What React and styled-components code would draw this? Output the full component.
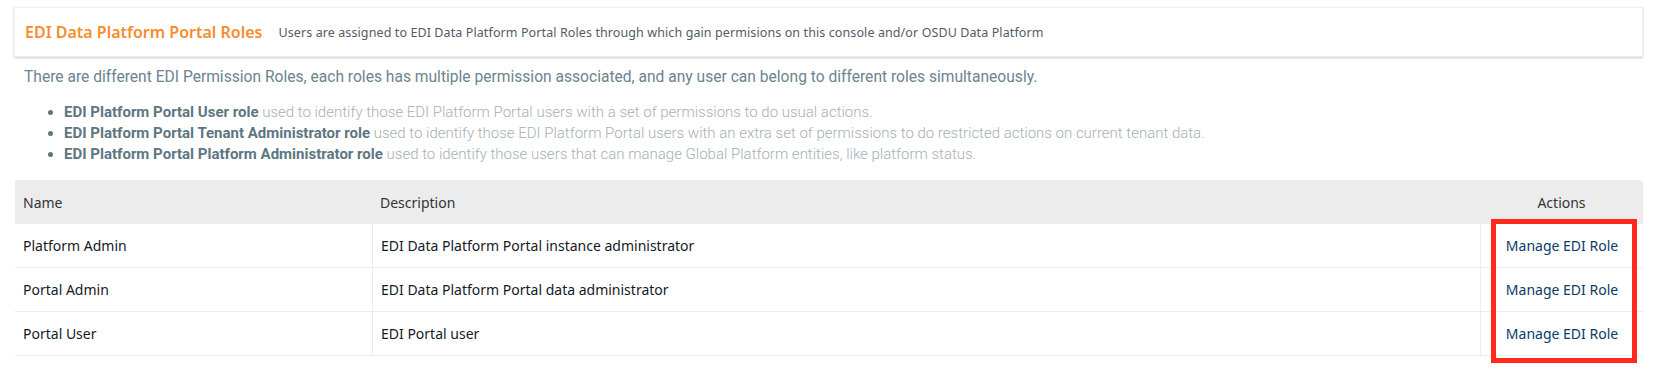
import React from 'react'
import styled, { createGlobalStyle } from 'styled-components'

const GlobalStyle = createGlobalStyle`
    body {
        margin: 0;
        background: #ffffff;
        font-family: "Open Sans", "Noto Sans", sans-serif;
    }
`

const roles = [
    { name: 'Platform Admin', description: 'EDI Data Platform Portal instance administrator' },
    { name: 'Portal Admin', description: 'EDI Data Platform Portal data administrator' },
    { name: 'Portal User', description: 'EDI Portal user' },
]

const bullets = [
    { strong: 'EDI Platform Portal User role', text: 'used to identify those EDI Platform Portal users with a set of permissions to do usual actions.' },
    { strong: 'EDI Platform Portal Tenant Administrator role', text: 'used to identify those EDI Platform Portal users with an extra set of permissions to do restricted actions on current tenant data.' },
    { strong: 'EDI Platform Portal Platform Administrator role', text: 'used to identify those users that can manage Global Platform entities, like platform status.' },
]

const App = () => {
    return <Wrapper>
        <GlobalStyle />
        <Header>
            <Title>EDI Data Platform Portal Roles</Title>
            <Subtitle>Users are assigned to EDI Data Platform Portal Roles through which gain permisions on this console and/or OSDU Data Platform</Subtitle>
        </Header>
        <Intro>There are different EDI Permission Roles, each roles has multiple permission associated, and any user can belong to different roles simultaneously.</Intro>
        <RoleList>
            {bullets.map(b => (
                <li key={b.strong}><strong>{b.strong}</strong> {b.text}</li>
            ))}
        </RoleList>
        <TableWrap>
            <Table>
                <colgroup>
                    <col style={{ width: 357 }} />
                    <col />
                    <col style={{ width: 163 }} />
                </colgroup>
                <thead>
                    <tr>
                        <Th>Name</Th>
                        <Th>Description</Th>
                        <Th $center>Actions</Th>
                    </tr>
                </thead>
                <tbody>
                    {roles.map(r => (
                        <tr key={r.name}>
                            <Td>{r.name}</Td>
                            <Td>{r.description}</Td>
                            <Td $center><RoleLink href='#'>Manage EDI Role</RoleLink></Td>
                        </tr>
                    ))}
                </tbody>
            </Table>
            <Highlight />
        </TableWrap>
    </Wrapper>
}

const Wrapper = styled.main`
    padding: 7px 12px 0 14px;
`

const Header = styled.header`
    height: 50px;
    box-sizing: border-box;
    display: flex;
    align-items: center;
    gap: 16px;
    padding: 0 10px;
    background: #ffffff;
    border: 1px solid #eef0f0;
    box-shadow: 0 1px 2px rgba(0, 28, 36, 0.22);
`

const Title = styled.h1`
    margin: 0;
    font-size: 16px;
    font-weight: 600;
    color: #f68d2e;
    font-family: "Noto Sans", "Open Sans", sans-serif;
`

const Subtitle = styled.span`
    font-size: 12.5px;
    color: #545b64;
    font-family: "Noto Sans", "Open Sans", sans-serif;
    letter-spacing: 0.1px;
`

const Intro = styled.p`
    margin: 8px 0 0 10px;
    font-family: Roboto, sans-serif;
    font-size: 15.6px;
    font-weight: 400;
    color: #6b8490;
    line-height: 24px;
`

const RoleList = styled.ul`
    margin: 13px 0 0 0;
    padding-left: 50px;
    font-family: Roboto, sans-serif;
    font-size: 15px;
    line-height: 21px;
    font-weight: 300;
    color: #a6b0b5;

    li::marker {
        color: #5d7682;
    }

    strong {
        font-weight: 700;
        color: #5d7682;
    }
`

const TableWrap = styled.div`
    position: relative;
    margin-top: 15px;
    margin-left: 1px;
    padding-bottom: 12px;
`

const Table = styled.table`
    width: 100%;
    table-layout: fixed;
    border-collapse: separate;
    border-spacing: 0;
    font-family: "Noto Sans", "Open Sans", sans-serif;
    font-size: 14px;
    color: #16191f;
`

const Th = styled.th`
    height: 44px;
    padding: 0 8px;
    background: #ececec;
    font-weight: 400;
    color: #303438;
    text-align: ${p => (p.$center ? 'center' : 'left')};

    &:last-child {
        border-top-right-radius: 4px;
    }
`

const Td = styled.td`
    height: 43px;
    padding: 0 8px;
    border-bottom: 1px solid #eaeded;
    text-align: ${p => (p.$center ? 'center' : 'left')};

    & + & {
        border-left: 1px solid #eaeded;
    }
`

const RoleLink = styled.a`
    color: #0b3a67;
    text-decoration: none;
`

const Highlight = styled.div`
    position: absolute;
    top: 39px;
    right: 6px;
    width: 146px;
    height: 144px;
    box-sizing: border-box;
    border: 5px solid #ff2a1c;
    pointer-events: none;
`

export default App
